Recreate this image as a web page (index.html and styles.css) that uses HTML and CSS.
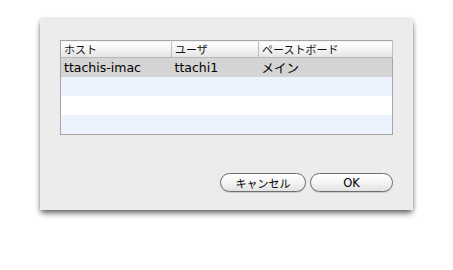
FILE: index.html
```html
<!DOCTYPE html>
<html lang="ja">
<head>
  <meta charset="UTF-8">
  <title>ペーストボード</title>
  <link rel="stylesheet" href="styles.css">
</head>
<body>
  <div class="sheet">
    <table class="hosts">
      <colgroup>
        <col class="col-host">
        <col class="col-user">
        <col class="col-board">
      </colgroup>
      <thead>
        <tr>
          <th>ホスト</th>
          <th>ユーザ</th>
          <th>ペーストボード</th>
        </tr>
      </thead>
      <tbody>
        <tr class="selected">
          <td>ttachis-imac</td>
          <td>ttachi1</td>
          <td>メイン</td>
        </tr>
        <tr class="alt"><td></td><td></td><td></td></tr>
        <tr><td></td><td></td><td></td></tr>
        <tr class="alt"><td></td><td></td><td></td></tr>
      </tbody>
    </table>

    <div class="buttons">
      <button class="btn btn-cancel">キャンセル</button>
      <button class="btn btn-ok">OK</button>
    </div>
  </div>
</body>
</html>
```

FILE: styles.css
```css
body {
  margin: 0;
  padding: 19px 0 0 40px;
  min-height: 100vh;
  box-sizing: border-box;
  background-color: #ffffff;
  font-family: 'DejaVu Sans', 'Noto Sans CJK JP', sans-serif;
}

.sheet {
  width: 373px;
  height: 191px;
  box-sizing: border-box;
  padding: 21px 20px 0 20px;
  background-color: #ececec;
  box-shadow: 0 4px 6px -1px rgba(0, 0, 0, 0.6), 0 0 4px rgba(0, 0, 0, 0.2);
  display: flex;
  flex-direction: column;
}

.hosts {
  width: 333px;
  table-layout: fixed;
  border-collapse: collapse;
  border: 1px solid #a5a5a5;
  background-color: #ffffff;
}

.col-host {
  width: 111px;
}

.col-user {
  width: 87px;
}

th {
  height: 16px;
  padding: 0 0 0 3px;
  text-align: left;
  font-family: 'Noto Sans CJK JP', sans-serif;
  font-weight: normal;
  font-size: 11px;
  color: #111111;
  background: linear-gradient(#ffffff, #f3f3f3 50%, #e4e4e4);
  border-right: 1px solid #bdbdbd;
  border-bottom: 1px solid #b8b8b8;
  line-height: 14px;
}

td {
  height: 19px;
  padding: 0 0 0 3px;
  font-size: 12.5px;
  color: #000000;
  white-space: nowrap;
  overflow: hidden;
}

tr.selected td {
  background-color: #d4d4d4;
}

tr.alt td {
  background-color: #edf3fe;
}

.buttons {
  display: flex;
  justify-content: flex-end;
  gap: 4px;
  margin-top: 38px;
}

.btn {
  height: 19px;
  border: 1px solid #6e6e6e;
  border-radius: 10px;
  background: linear-gradient(#ffffff, #f4f4f4 50%, #e2e2e2);
  box-shadow: 0 1px 1px rgba(0, 0, 0, 0.15);
  font-family: 'Noto Sans CJK JP', 'DejaVu Sans', sans-serif;
  font-size: 11px;
  color: #000000;
  padding: 0;
  line-height: 16px;
}

.btn-cancel {
  width: 86px;
}

.btn-ok {
  width: 83px;
  font-family: 'DejaVu Sans', sans-serif;
  font-size: 11.5px;
}
```
